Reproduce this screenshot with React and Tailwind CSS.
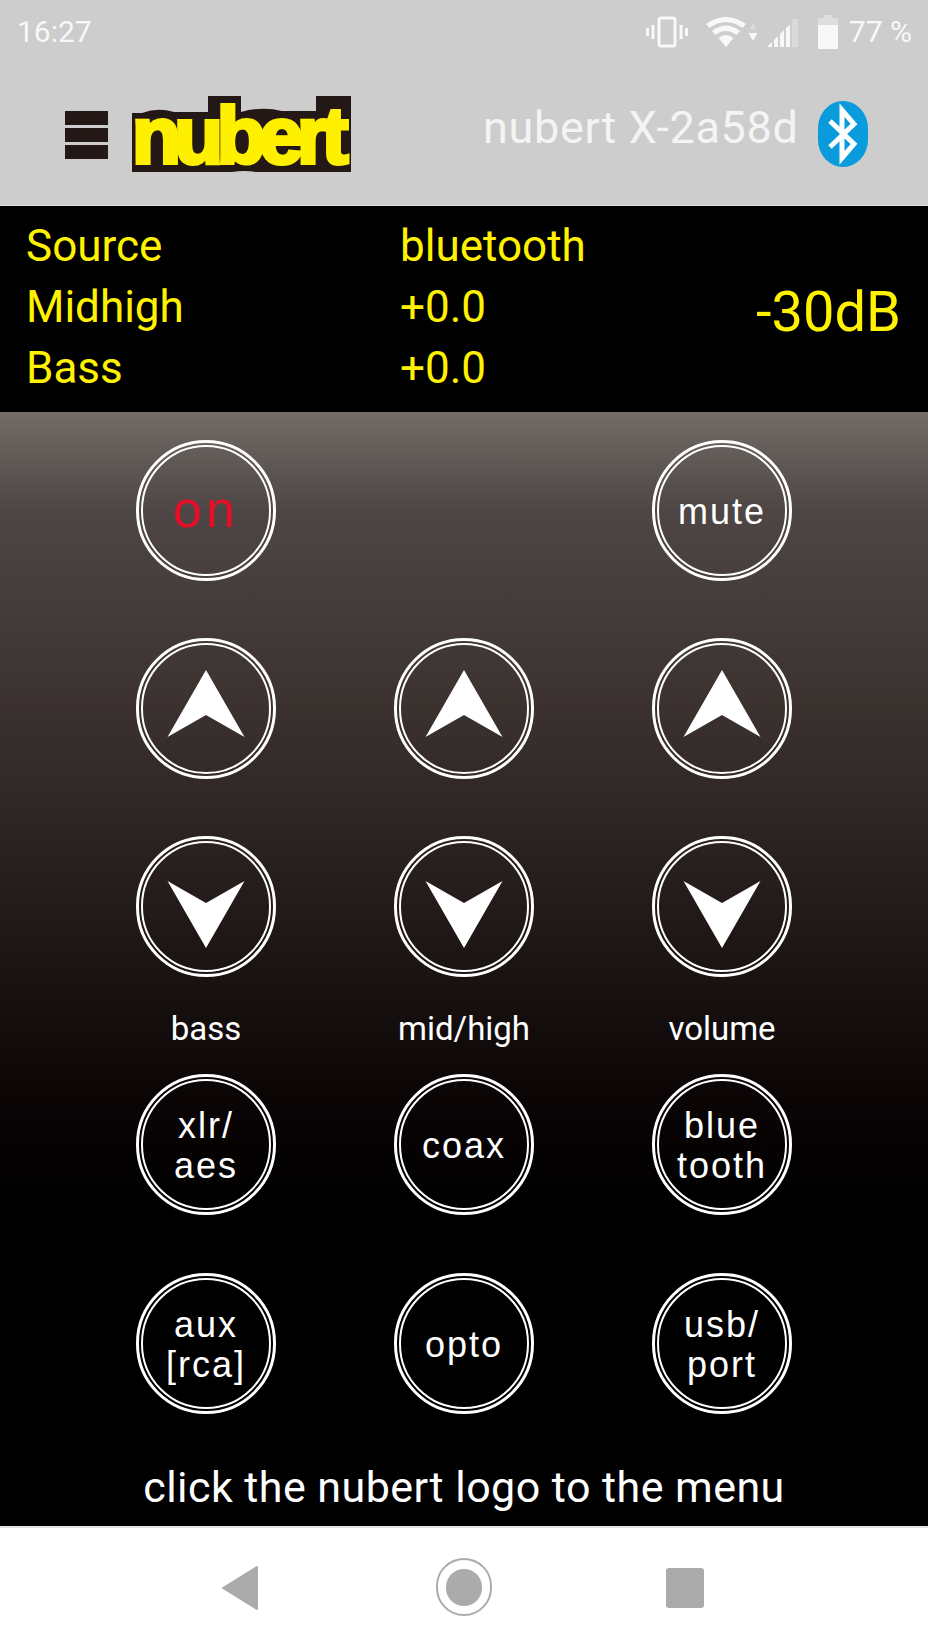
import React from 'react';

const ROBOTO = "font-['Roboto',sans-serif]";

const Arrow = ({ down }) => (
  <svg width="78" height="68" viewBox="0 0 78 68" className={down ? 'rotate-180 translate-y-[6px]' : '-translate-y-[6px]'}>
    <path d="M39 0 L77.5 67 L39 45 L0.5 67 Z" fill="#fff" />
  </svg>
);

const Ring = ({ children }) => (
  <button className="w-[140px] h-[141px] rounded-full border-[3px] border-white p-[2px] justify-self-center">
    <div className="w-full h-full rounded-full border-[2px] border-white flex items-center justify-center text-center text-white font-['Liberation_Sans',sans-serif] text-[36px] leading-[40px] tracking-[2px] pt-[2px]">
      {children}
    </div>
  </button>
);

const Logo = () => (
  <svg width="219" height="77" viewBox="0 0 219 77" className="overflow-visible">
    <path d="M0 17 H10 Q26 11 42 16 H76 V0 H109 V16 Q130 10 150 15 H184 V0 H219 V76 H124 Q112 74 100 76 H0 Z" fill="#231815" />
    <text x="0" y="67" fontFamily="Liberation Sans, sans-serif" fontWeight="700" fontSize="80" letterSpacing="-6.5" fill="#fff000" stroke="#fff000" strokeWidth="4">nubert</text>
  </svg>
);

const BluetoothBadge = () => (
  <svg width="50" height="66" viewBox="0 0 50 66">
    <rect x="0" y="0" width="50" height="66" rx="25" ry="27" fill="#0a9bdc" />
    <path d="M12 20 L36 43 L24 57 V9 L36 23 L12 46" fill="none" stroke="#fff" strokeWidth="5" />
  </svg>
);

const StatusIcons = () => (
  <div className="flex items-center text-[#f8f8f8]">
    <svg width="42" height="32" viewBox="0 0 42 32" fill="none" stroke="currentColor">
      <rect x="13" y="2" width="16" height="28" rx="2" strokeWidth="3" />
      <path d="M7 9 V23 M35 9 V23" strokeWidth="3" />
      <path d="M1.5 12 V20 M40.5 12 V20" strokeWidth="3" />
    </svg>
    <svg width="40" height="32" viewBox="0 0 40 32" className="ml-[18px]" fill="currentColor">
      <path d="M0 8 Q20 -6 40 8 L36.5 12 Q20 0 3.5 12 Z" />
      <path d="M6 15 Q20 4 34 15 L30.5 19 Q20 11 9.5 19 Z" />
      <path d="M12.5 22 Q20 16 27.5 22 L20 31 Z" />
    </svg>
    <svg width="10" height="20" viewBox="0 0 10 20" className="ml-[2px]" fill="currentColor">
      <path d="M5 1 L8 7 H2 Z" opacity="0.4" />
      <path d="M0.5 11 H9.5 L5 19 Z" />
    </svg>
    <svg width="32" height="32" viewBox="0 0 32 32" className="ml-[9px]" fill="currentColor">
      <path d="M0 31 L5 26 V31 Z M7 24 L11 20 V31 H7 Z M13 18 L17 14 V31 H13 Z M19 12 L23 9 V31 H19 Z" />
      <path d="M25 3 H31 V31 H25 Z" opacity="0.3" />
    </svg>
    <svg width="20" height="34" viewBox="0 0 20 34" className="ml-[19px]" fill="currentColor">
      <path d="M6 0 H14 V3 H20 V10 H0 V3 H6 Z" opacity="0.4" />
      <path d="M0 10 H20 V34 H0 Z" />
    </svg>
    <span className="ml-[11px] text-[30px] leading-none">77 %</span>
  </div>
);

const App = () => {
  return (
    <div className={`w-[928px] h-[1650px] flex flex-col overflow-hidden ${ROBOTO}`}>
      {/* status bar + header */}
      <div className="h-[206px] bg-[#cdcdcd] border-b border-b-[#dedede] flex flex-col shrink-0">
        <div className="h-[64px] pl-[17px] pr-[16px] flex items-center justify-between text-[#f8f8f8]">
          <span className="text-[30px] leading-none">16:27</span>
          <StatusIcons />
        </div>
        <div className="flex items-start pl-[65px] pt-[32px]">
          <div className="w-[43px] mt-[15px] flex flex-col gap-[3px]">
            <div className="h-[14px] bg-[#231815]" />
            <div className="h-[14px] bg-[#231815]" />
            <div className="h-[14px] bg-[#231815]" />
          </div>
          <div className="ml-[24px]">
            <Logo />
          </div>
          <span className="ml-[132px] mt-[7px] text-[45px] leading-[50px] text-[#f4f4f4] tracking-[0.65px] whitespace-nowrap">nubert X-2a58d</span>
          <div className="ml-[19px] mt-[5px]">
            <BluetoothBadge />
          </div>
        </div>
      </div>

      {/* readout */}
      <div className="h-[206px] bg-black text-[#fff200] text-[44px] leading-[61px] pl-[26px] pr-[27px] pt-[10px] flex shrink-0">
        <div className="w-[374px]">
          <div>Source</div>
          <div>Midhigh</div>
          <div>Bass</div>
        </div>
        <div className="flex-1">
          <div>bluetooth</div>
          <div>+0.0</div>
          <div>+0.0</div>
        </div>
        <div className="flex items-center text-[56px] pb-[4px]">-30dB</div>
      </div>

      {/* buttons */}
      <div className="flex-1 pt-[28px] bg-[linear-gradient(to_bottom,#726b67_0px,#4e4644_98px,#3b3230_296px,#231b19_494px,#0a0405_690px,#000_800px)] flex flex-col items-center">
        <div className="w-full px-[77px] grid grid-cols-3 gap-y-[57px]">
          <Ring><span className="text-[#e60f28] text-[52px] tracking-[4px] relative -top-[3px]">on</span></Ring>
          <div />
          <Ring>mute</Ring>
          <Ring><Arrow /></Ring>
          <Ring><Arrow /></Ring>
          <Ring><Arrow /></Ring>
          <Ring><Arrow down /></Ring>
          <Ring><Arrow down /></Ring>
          <Ring><Arrow down /></Ring>
        </div>
        <div className="w-full h-[97px] px-[77px] pt-[6px] grid grid-cols-3 items-center text-center text-white text-[33px]">
          <div>bass</div>
          <div>mid/high</div>
          <div>volume</div>
        </div>
        <div className="w-full px-[77px] grid grid-cols-3 gap-y-[58px]">
          <Ring>xlr/<br />aes</Ring>
          <Ring>coax</Ring>
          <Ring>blue<br />tooth</Ring>
          <Ring>aux<br />[rca]</Ring>
          <Ring>opto</Ring>
          <Ring>usb/<br />port</Ring>
        </div>
        <div className="mt-[46px] text-white text-[43px] leading-[54px] tracking-[0.45px] whitespace-nowrap">click the nubert logo to the menu</div>
      </div>

      {/* android nav */}
      <div className="h-[124px] bg-white border-t-2 border-t-[#e2e2e2] shrink-0 flex items-start pl-[222px] pt-[30px]">
        <svg width="36" height="46" viewBox="0 0 36 46" className="mt-[7px]">
          <path d="M35 2 V44 L1 23 Z" fill="#ababab" stroke="#ababab" strokeWidth="2" strokeLinejoin="round" />
        </svg>
        <div className="ml-[178px] w-[56px] h-[58px] rounded-full border-2 border-[#ababab] flex items-center justify-center">
          <div className="w-[36px] h-[37px] rounded-full bg-[#ababab]" />
        </div>
        <div className="ml-[174px] mt-[10px] w-[38px] h-[40px] rounded-[3px] bg-[#ababab]" />
      </div>
    </div>
  );
};

export default App;
